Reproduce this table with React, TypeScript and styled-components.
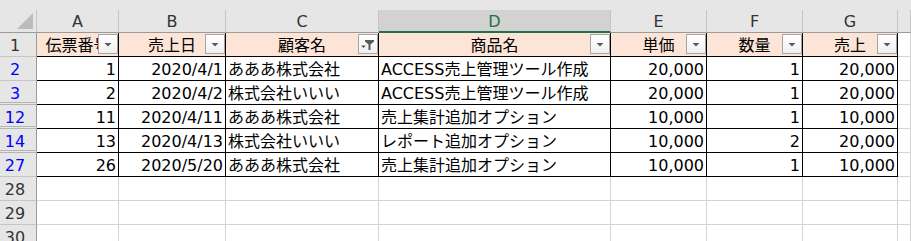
import styled, { createGlobalStyle } from 'styled-components';

type Align = 'left' | 'right' | 'center';

interface Record {
  row: number;
  cells: string[];
}

const GlobalStyle = createGlobalStyle`
  html, body {
    margin: 0;
    padding: 0;
    background: #ffffff;
  }
  body {
    font-family: "DejaVu Sans", "Noto Sans CJK JP", sans-serif;
    font-size: 16px;
    color: #000000;
  }
`;

const COLUMNS = [
  { letter: 'A', width: 82, title: '伝票番号', align: 'right' as Align },
  { letter: 'B', width: 107, title: '売上日', align: 'right' as Align },
  { letter: 'C', width: 153, title: '顧客名', align: 'left' as Align, filtered: true },
  { letter: 'D', width: 232, title: '商品名', align: 'left' as Align, selected: true },
  { letter: 'E', width: 96, title: '単価', align: 'right' as Align },
  { letter: 'F', width: 96, title: '数量', align: 'right' as Align },
  { letter: 'G', width: 95, title: '売上', align: 'right' as Align },
];

const RECORDS: Record[] = [
  { row: 2, cells: ['1', '2020/4/1', 'あああ株式会社', 'ACCESS売上管理ツール作成', '20,000', '1', '20,000'] },
  { row: 3, cells: ['2', '2020/4/2', '株式会社いいい', 'ACCESS売上管理ツール作成', '20,000', '1', '20,000'] },
  { row: 12, cells: ['11', '2020/4/11', 'あああ株式会社', '売上集計追加オプション', '10,000', '1', '10,000'] },
  { row: 14, cells: ['13', '2020/4/13', '株式会社いいい', 'レポート追加オプション', '10,000', '2', '20,000'] },
  { row: 27, cells: ['26', '2020/5/20', 'あああ株式会社', '売上集計追加オプション', '10,000', '1', '10,000'] },
];

const EMPTY_ROWS = [28, 29, 30];

const Sheet = styled.div`
  width: 911px;
  height: 241px;
  overflow: hidden;
  background: #ffffff;
`;

const TopStrip = styled.div`
  height: 10px;
  background: #e6e6e6;
`;

const Grid = styled.div`
  display: grid;
  grid-template-columns: 37px ${COLUMNS.map((c) => `${c.width}px`).join(' ')} 1fr;
  grid-template-rows: 23px;
  grid-auto-rows: 24px;
`;

const Corner = styled.div`
  display: flex;
  justify-content: flex-end;
  align-items: flex-end;
  padding: 0 3px 3px 0;
  background: #e6e6e6;
  border-right: 1px solid #c6c6c6;
  border-bottom: 1px solid #9b9b9b;
`;

const CornerMark = styled.div`
  width: 0;
  height: 0;
  border-left: 16px solid transparent;
  border-bottom: 16px solid #bcbcbc;
`;

const ColHead = styled.div<{ $selected?: boolean }>`
  display: flex;
  justify-content: center;
  align-items: center;
  padding-top: 1px;
  background: ${(p) => (p.$selected ? '#d2d2d2' : '#e6e6e6')};
  color: ${(p) => (p.$selected ? '#217346' : '#333333')};
  border-right: 1px solid #c6c6c6;
  border-bottom: ${(p) => (p.$selected ? '2px solid #217346' : '1px solid #9b9b9b')};
`;

const RowHead = styled.div<{ $filtered?: boolean; $gap?: boolean }>`
  box-sizing: border-box;
  padding: 2px 6px 0 0;
  text-align: center;
  line-height: 21px;
  background: #e6e6e6;
  color: ${(p) => (p.$filtered ? '#0000ff' : '#333333')};
  border-right: 1px solid #9b9b9b;
  border-bottom: ${(p) => (p.$gap ? '3px double #b4b4b4' : '1px solid #c6c6c6')};
`;

const Cell = styled.div<{ $align?: Align; $edge?: boolean }>`
  box-sizing: border-box;
  padding: 2px 2px 0;
  line-height: 21px;
  white-space: nowrap;
  overflow: hidden;
  text-align: ${(p) => p.$align ?? 'left'};
  border-right: 1px solid ${(p) => (p.$edge ? '#000000' : '#d4d4d4')};
  border-bottom: 1px solid ${(p) => (p.$edge ? '#000000' : '#d4d4d4')};
`;

const TitleCell = styled(Cell)`
  position: relative;
  background: #fce4d6;
  text-align: center;
`;

const FilterButton = styled.div`
  position: absolute;
  top: 1px;
  right: 0;
  width: 18px;
  height: 18px;
  display: flex;
  align-items: center;
  justify-content: center;
  background: linear-gradient(#ffffff, #f0f0f0);
  border: 1px solid #a6a6a6;
`;

const Arrow = () => (
  <svg width="18" height="18" viewBox="0 0 18 18">
    <path d="M5.5 8 L12.5 8 L9 11.5 Z" fill="#595959" />
  </svg>
);

const Funnel = () => (
  <svg width="18" height="18" viewBox="0 0 18 18">
    <path d="M2 10.5 L7 10.5 L4.5 13 Z" fill="#595959" />
    <path d="M6 5 L15 5 L15 6.5 L11.5 9.5 L11.5 15 L9.5 15 L9.5 9.5 L6 6.5 Z" fill="#595959" />
  </svg>
);

export default function App() {
  return (
    <>
      <GlobalStyle />
      <Sheet>
        <TopStrip />
        <Grid>
          <Corner>
            <CornerMark />
          </Corner>
          {COLUMNS.map((c) => (
            <ColHead key={c.letter} $selected={c.selected}>
              {c.letter}
            </ColHead>
          ))}
          <ColHead />

          <RowHead>1</RowHead>
          {COLUMNS.map((c) => (
            <TitleCell key={c.title} $edge>
              {c.title}
              <FilterButton>{c.filtered ? <Funnel /> : <Arrow />}</FilterButton>
            </TitleCell>
          ))}
          <Cell />

          {RECORDS.map((r, i) => {
            const next = RECORDS[i + 1]?.row ?? EMPTY_ROWS[0];
            return [
              <RowHead key={`h${r.row}`} $filtered $gap={next - r.row > 1}>
                {r.row}
              </RowHead>,
              ...r.cells.map((v, j) => (
                <Cell key={`${r.row}-${j}`} $edge $align={COLUMNS[j].align}>
                  {v}
                </Cell>
              )),
              <Cell key={`e${r.row}`} />,
            ];
          })}

          {EMPTY_ROWS.map((n) => [
            <RowHead key={`h${n}`}>{n}</RowHead>,
            ...COLUMNS.map((c) => <Cell key={`${n}-${c.letter}`} />),
            <Cell key={`e${n}`} />,
          ])}
        </Grid>
      </Sheet>
    </>
  );
}
